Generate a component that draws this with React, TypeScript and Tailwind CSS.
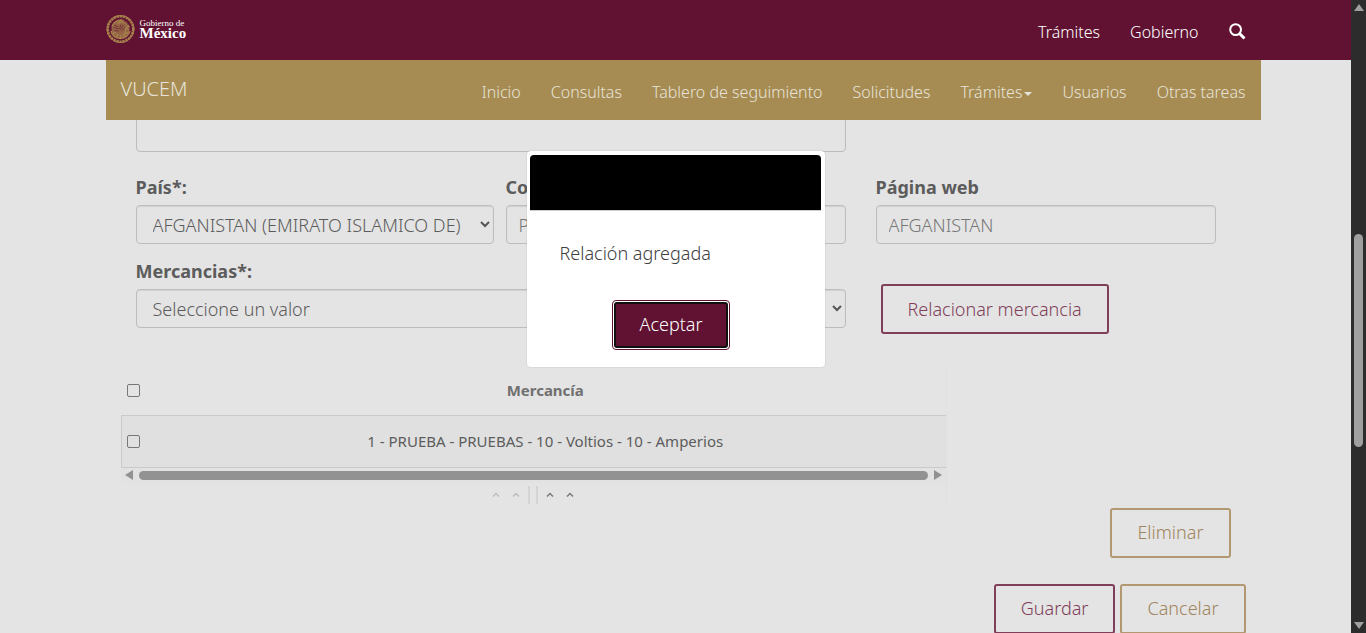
import React from "react";
import type { ReactNode } from "react";

const mainLinks = ["Inicio", "Consultas", "Tablero de seguimiento", "Solicitudes", "Trámites", "Usuarios", "Otras tareas"];

function Seal() {
  return (
    <svg viewBox="0 0 58 58" className="h-[30px] w-[29px]" fill="none" stroke="#a57f4c" aria-hidden="true">
      <circle cx="29" cy="29" r="25.5" strokeWidth="5" strokeDasharray="5 1.2" />
      <circle cx="29" cy="29" r="27" strokeWidth="2" />
      <path d="M11 26C13 14 24 8 35 11c8 3 12 10 12 18 0 10-8 18-18 18-11 0-19-9-18-21z" fill="#a57f4c" fillOpacity="0.75" stroke="none" />
      <path d="M12 24c3-9 12-14 21-13-5 1-8 4-9 7 6-4 13-3 17 1l5 5-4 1 2 4-5-1c1 5 0 10-4 13" strokeWidth="2.5" />
      <path d="M10 33c2 9 9 14 19 15 9-1 16-6 19-15M14 38l6-2m0 8l5-5m4 8v-6m9 3l-4-5m10-1l-6-2" strokeWidth="3" />
      <path d="M16 21l9 4m-10 1l10 3m-8 3l9 1m4-13l-3 9m8-8l-6 9m9-4l-7 6M36 14c4 1 7 4 8 7" stroke="#611232" strokeWidth="1.2" />
    </svg>
  );
}

function Label({ htmlFor, children }: { htmlFor: string; children: ReactNode }) {
  return (
    <label htmlFor={htmlFor} className="mb-[5px] block text-[18px] leading-[26px] font-bold">
      {children}
    </label>
  );
}

const field =
  "block rounded-[4px] border border-[#bdbdbd] bg-[#e4e4e4] text-[18px] font-light shadow-[inset_0_1px_1px_rgba(0,0,0,0.08)]";
const outlineButton = "h-[50px] rounded-[3px] border-2 px-[25px] text-[18px] font-light whitespace-nowrap";

function SelectField({ id, value, className }: { id: string; value: string; className: string }) {
  return (
    <div className={`relative ${className}`}>
      <select id={id} defaultValue={value} className={`${field} h-[39px] w-full appearance-none px-4 pt-[2px]`}>
        <option>{value}</option>
      </select>
      <svg viewBox="0 0 10 7" className="pointer-events-none absolute top-4 right-1 h-[7px] w-[10px]" fill="none" stroke="#555" strokeWidth="2" aria-hidden="true">
        <path d="M1 1l4 4 4-4" />
      </svg>
    </div>
  );
}

function Header() {
  return (
    <header className="relative z-10 shrink-0">
      <div className="bg-[#611232]">
        <div className="mx-auto flex h-[60px] max-w-[1170px] items-start justify-between pl-[15px]">
          <a href="#inicio" className="flex gap-[5px] pt-[14px] text-white">
            <Seal />
            <span className="flex flex-col pt-[4px] font-['Liberation_Serif',serif]">
              <span className="text-[9px] leading-[10px]">Gobierno de</span>
              <span className="text-[15px] leading-[11px] font-bold">México</span>
            </span>
          </a>
          <nav className="flex pt-5 pr-[15px] text-[16px] leading-6 font-light text-white">
            <a href="#tramites" className="mr-[30px]">Trámites</a>
            <a href="#gobierno" className="mr-[30px]">Gobierno</a>
            <button type="button" aria-label="Buscar" className="flex h-6 items-start pt-[3px]">
              <svg viewBox="0 0 17 17" className="size-[17px]" fill="none" stroke="currentColor" aria-hidden="true">
                <circle cx="6.6" cy="6.6" r="5.4" strokeWidth="2" />
                <path d="M10.5 10.5l5 5" strokeWidth="3" />
              </svg>
            </button>
          </nav>
        </div>
      </div>
      <div className="mx-auto max-w-[1170px] pl-[15px]">
        <div className="flex h-[60px] items-start justify-between bg-[#a68c52] px-[15px] font-light text-[#e6e3da]">
          <a href="#vucem" className="pt-[15px] text-[20px] leading-7">VUCEM</a>
          <nav className="flex gap-[30px] pt-5 text-[16px] leading-6">
            {mainLinks.map((link, i) => (
              <a key={link} href={`#menu-${i}`} className="flex items-center whitespace-nowrap">
                {link}
                {link === "Trámites" && <span className="mt-1 ml-[2px] border-x-4 border-t-4 border-x-transparent" />}
              </a>
            ))}
          </nav>
        </div>
      </div>
    </header>
  );
}

function Caret({ color }: { color: string }) {
  return (
    <svg viewBox="0 0 8 5" className="h-[5px] w-2" fill="none" stroke={color} strokeWidth="1.4" aria-hidden="true">
      <path d="M1 4.5l3-3 3 3" />
    </svg>
  );
}

function GoodsTable() {
  return (
    <div className="w-[826px] border-r border-[#e0e0e0]">
      <table className="w-full border-collapse text-[15px]">
        <thead>
          <tr className="h-[49px]">
            <th className="w-6 pl-[6px] text-left">
              <input type="checkbox" aria-label="Seleccionar todo" className="block size-[13px] appearance-none rounded-[2px] border border-[#777]" />
            </th>
            <th className="text-center font-bold text-[#707070]">Mercancía</th>
          </tr>
        </thead>
        <tbody>
          <tr className="h-[52px] border-y border-l border-[#cacaca] bg-[#e0e0e0]">
            <td className="w-6 pl-[5px]">
              <input type="checkbox" aria-label="Seleccionar mercancía 1" className="block size-[13px] appearance-none rounded-[2px] border border-[#777]" />
            </td>
            <td className="text-center">1 - PRUEBA - PRUEBAS - 10 - Voltios - 10 - Amperios</td>
          </tr>
        </tbody>
      </table>
      <div className="flex h-[15px] items-center justify-between bg-[#e2e2e2] px-1">
        <span className="border-y-[5px] border-r-8 border-y-transparent border-r-[#929292]" />
        <span className="mx-[6px] h-[9px] flex-1 rounded-full bg-[#929292]" />
        <span className="border-y-[5px] border-l-8 border-y-transparent border-l-[#929292]" />
      </div>
      <div className="flex h-[22px] items-center justify-center gap-3 pt-[2px]">
        <Caret color="#bcbcbc" />
        <Caret color="#bcbcbc" />
        <span className="-mx-1 flex h-[18px] w-[10px] border-x-2 border-[#d4d4d4]" />
        <Caret color="#777" />
        <Caret color="#777" />
      </div>
    </div>
  );
}

function Dialog() {
  return (
    <div className="absolute inset-0 z-20 flex items-start justify-center pt-[151px]">
      <div role="dialog" aria-modal="true" aria-label="Aviso" className="w-[298px] rounded-[4px] bg-white pt-1 pr-1 pb-[17px] pl-[3px] shadow-[0_0_1px_1px_rgba(0,0,0,0.05)]">
        <div className="h-14 rounded-t-[4px] border-b border-[#ccc] bg-black" />
        <p className="px-[30px] pt-[29px] text-[18px] leading-[26px] font-light text-[#404040]">Relación agregada</p>
        <div className="flex justify-center pt-[34px] pr-2">
          <button type="button" className="h-[50px] rounded-[4px] border border-[#611232] bg-white p-px text-[18px] font-light text-white">
            <span className="flex h-full items-center rounded-[3px] border-2 border-[#101010] bg-[#611232] px-[23px] pb-[2px]">Aceptar</span>
          </button>
        </div>
      </div>
    </div>
  );
}

function PageScrollbar() {
  return (
    <div aria-hidden="true" className="flex w-[15px] shrink-0 flex-col items-center bg-[#2c2c2c] py-1">
      <span className="border-x-[5px] border-b-[7px] border-x-transparent border-b-[#9f9f9f]" />
      <span className="basis-[223px]" />
      <span className="h-[213px] w-[9px] rounded-full bg-[#9f9f9f]" />
      <span className="mt-auto border-x-[5px] border-t-[7px] border-x-transparent border-t-[#9f9f9f]" />
    </div>
  );
}

export default function App() {
  return (
    <div className="flex h-screen overflow-hidden bg-[#e4e4e4] font-['Noto_Sans',sans-serif] text-[#5c5c5c]">
      <div className="relative flex min-w-0 flex-1 flex-col overflow-hidden">
        <Header />
        <main className="mx-auto w-full max-w-[1170px] px-[15px]">
          <form className="pl-[15px]">
            <div className="grid grid-cols-3 pr-[15px]">
              <div className="col-span-2 px-[15px]">
                <textarea aria-label="Descripción" className={`${field} -mt-2 h-10 w-full resize-none px-3`} />
              </div>
            </div>
            <div className="grid grid-cols-3 pt-[22px] pr-[15px]">
              <div className="px-[15px]">
                <Label htmlFor="pais">País*:</Label>
                <SelectField id="pais" value="AFGANISTAN (EMIRATO ISLAMICO DE)" className="-mr-[18px]" />
              </div>
              <div className="px-[15px]">
                <Label htmlFor="correo">Correo electrónico</Label>
                <input id="correo" defaultValue="PRUEBA" className={`${field} h-[39px] w-full px-3 text-[#777]`} />
              </div>
              <div className="px-[15px]">
                <Label htmlFor="web">Página web</Label>
                <input id="web" defaultValue="AFGANISTAN" className={`${field} h-[39px] w-full px-3 text-[#777]`} />
              </div>
            </div>
            <div className="grid grid-cols-3 pt-[14px] pr-[15px]">
              <div className="col-span-2 px-[15px]">
                <Label htmlFor="mercancias">Mercancias*:</Label>
                <SelectField id="mercancias" value="Seleccione un valor" className="" />
              </div>
              <div className="px-5 pt-[26px]">
                <button type="button" className={`${outlineButton} border-[#803f59] text-[#803f59]`}>Relacionar mercancia</button>
              </div>
            </div>
            <div className="pt-8">
              <GoodsTable />
            </div>
            <div className="flex justify-end pt-[3px] pr-[15px]">
              <button type="button" className={`${outlineButton} border-[#b29870] text-[#a08560]`}>Eliminar</button>
            </div>
            <div className="flex justify-end gap-[5px] pt-[26px]">
              <button type="button" className={`${outlineButton} border-[#803f59] text-[#803f59]`}>Guardar</button>
              <button type="button" className={`${outlineButton} border-[#b29870] text-[#a08560]`}>Cancelar</button>
            </div>
          </form>
        </main>
        <Dialog />
      </div>
      <PageScrollbar />
    </div>
  );
}
